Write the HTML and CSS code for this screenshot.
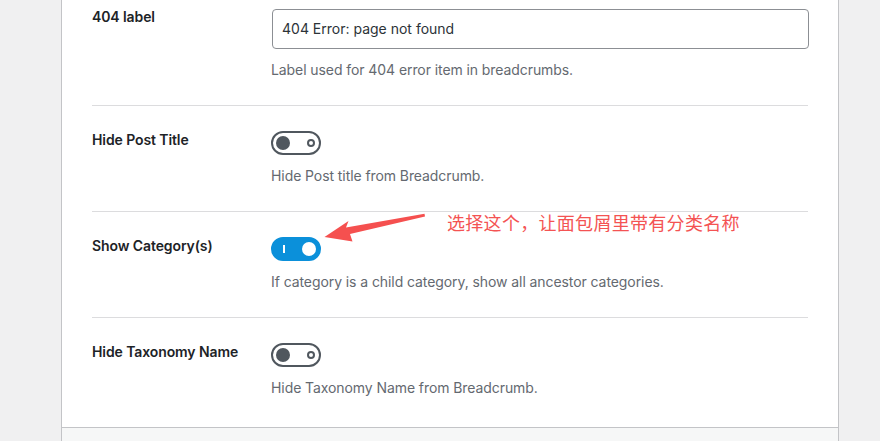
FILE: index.html
```html
<!DOCTYPE html>
<html lang="en">
<head>
<meta charset="utf-8">
<title>Breadcrumb settings</title>
<link rel="stylesheet" href="styles.css">
</head>
<body>
<div class="panel">
  <div class="rows">
    <div class="row row-first">
      <div class="label">404 label</div>
      <div class="field">
        <div class="input">404 Error: page not found</div>
        <p class="desc">Label used for 404 error item in breadcrumbs.</p>
      </div>
    </div>
    <div class="row">
      <div class="label">Hide Post Title</div>
      <div class="field">
        <span class="toggle"><span class="knob"></span><span class="ring"></span></span>
        <p class="desc">Hide Post title from Breadcrumb.</p>
      </div>
    </div>
    <div class="row row-annotated">
      <div class="label">Show Category(s)</div>
      <div class="field">
        <span class="toggle toggle-on"><span class="bar"></span><span class="knob"></span></span>
        <p class="desc">If category is a child category, show all ancestor categories.</p>
      </div>
      <svg class="arrow" viewBox="320 210 110 35" width="110" height="35" aria-hidden="true">
        <polygon fill="#f5504f" points="324.5,237 348.5,221 346,227.5 424.5,213.8 425,216.5 350,234 352.5,241.5"/>
      </svg>
      <div class="note">选择这个，让面包屑里带有分类名称</div>
    </div>
    <div class="row row-last">
      <div class="label">Hide Taxonomy Name</div>
      <div class="field">
        <span class="toggle"><span class="knob"></span><span class="ring"></span></span>
        <p class="desc">Hide Taxonomy Name from Breadcrumb.</p>
      </div>
    </div>
  </div>
  <div class="footer"></div>
</div>
</body>
</html>
```

FILE: styles.css
```css
html, body {
  margin: 0;
  padding: 0;
}
body {
  background: #f0f0f1;
  font-family: "Inter", "Noto Sans", sans-serif;
  font-size: 14px;
  color: #1d2327;
  height: 441px;
  overflow: hidden;
}
.panel {
  margin-left: 61px;
  width: 776px;
  background: #fff;
  border-left: 1px solid #c3c4c7;
  border-right: 1px solid #c3c4c7;
  min-height: 441px;
  display: flex;
  flex-direction: column;
}
.rows {
  padding: 0 30px;
}
.row {
  display: grid;
  grid-template-columns: 179px 1fr;
  padding: 25px 0 26px;
  border-top: 1px solid #dcdcde;
  position: relative;
}
.row-first {
  border-top: none;
  padding-top: 9px;
}
.row-last {
  padding-bottom: 30px;
}
.label {
  font-weight: 600;
  font-size: 14px;
  line-height: 18px;
  color: #1d2327;
  letter-spacing: -0.1px;
}
.row-first .label {
  margin-top: -1px;
}
.field {
  display: flex;
  flex-direction: column;
  align-items: flex-start;
}
.input {
  box-sizing: border-box;
  width: 537px;
  height: 40px;
  margin-left: 1px;
  border: 1px solid #8c8f94;
  border-radius: 4px;
  padding: 0 9px;
  line-height: 38px;
  color: #2c3338;
  font-size: 14px;
}
.desc {
  margin: 12px 0 0 0;
  font-size: 14px;
  line-height: 18px;
  color: #646970;
  letter-spacing: -0.08px;
}
.toggle {
  box-sizing: border-box;
  width: 50px;
  height: 24px;
  border: 2px solid #50575e;
  border-radius: 12px;
  background: #fff;
  display: flex;
  align-items: center;
  justify-content: space-between;
  padding: 0 4px 0 3px;
}
.toggle .knob {
  width: 14px;
  height: 14px;
  border-radius: 50%;
  background: #50575e;
}
.toggle .ring {
  box-sizing: border-box;
  width: 8px;
  height: 8px;
  border-radius: 50%;
  border: 2px solid #50575e;
}
.toggle-on {
  background: #0b90da;
  border-color: #0b90da;
  padding: 0 3px 0 10px;
}
.toggle-on .bar {
  width: 2px;
  height: 8px;
  background: #fff;
}
.toggle-on .knob {
  background: #fff;
}
.arrow {
  position: absolute;
  left: 228px;
  top: -2px;
}
.note {
  position: absolute;
  left: 355px;
  top: 0;
  font-family: "Noto Sans CJK SC", sans-serif;
  font-size: 18px;
  line-height: 20px;
  letter-spacing: 0.3px;
  color: #f45353;
}
.footer {
  flex: 1;
  border-top: 1px solid #c3c4c7;
  background: #f6f7f7;
}
```
